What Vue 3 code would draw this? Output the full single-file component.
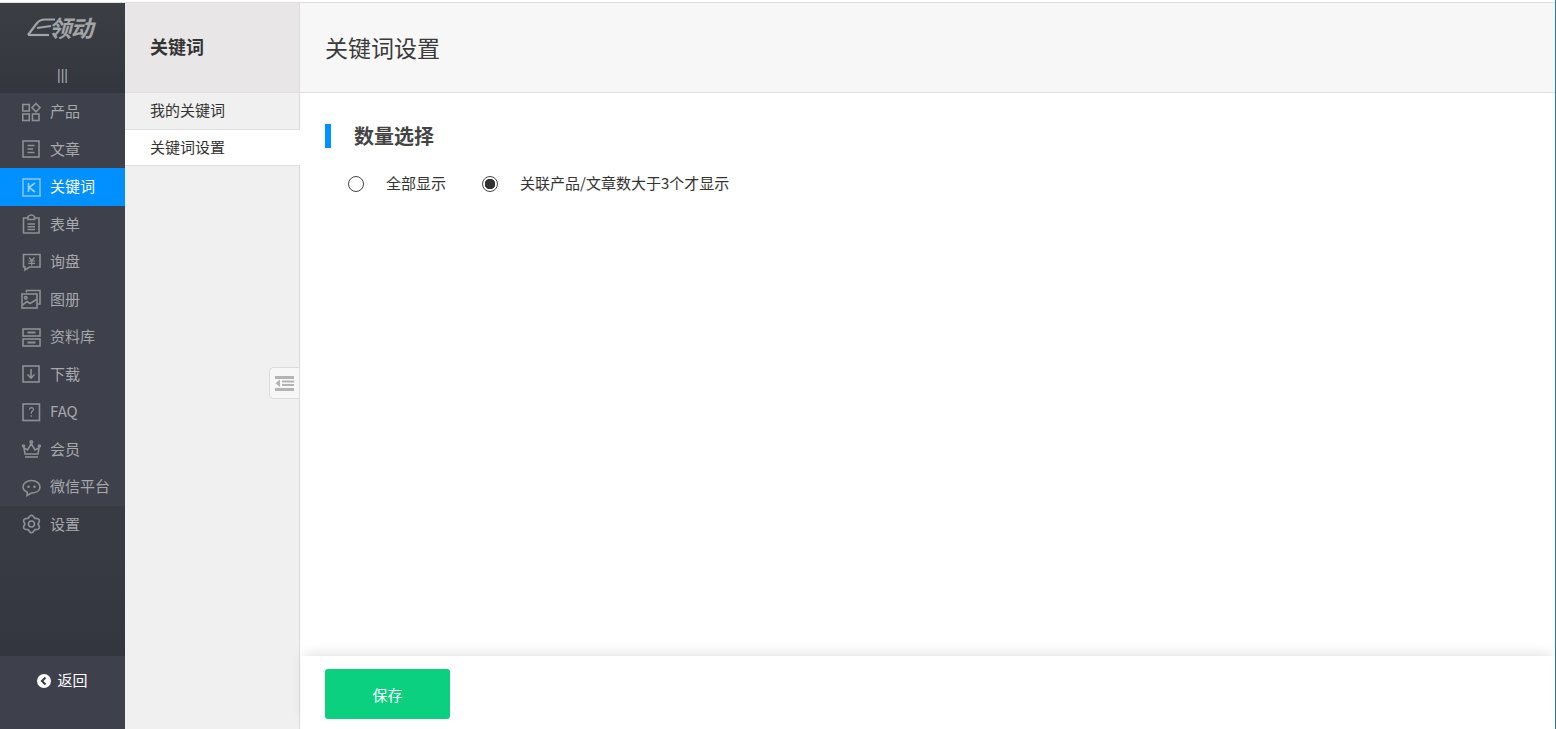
<script setup>
const menu = [
  { key: 'product', label: '产品' },
  { key: 'article', label: '文章' },
  { key: 'keyword', label: '关键词', active: true },
  { key: 'form', label: '表单' },
  { key: 'inquiry', label: '询盘' },
  { key: 'album', label: '图册' },
  { key: 'library', label: '资料库' },
  { key: 'download', label: '下载' },
  { key: 'faq', label: 'FAQ' },
  { key: 'member', label: '会员' },
  { key: 'wechat', label: '微信平台' },
  { key: 'settings', label: '设置', dark: true }
]
</script>

<template>
  <div class="page">
    <div class="topline"></div>
    <div class="main">
      <aside class="sidebar">
        <div class="brand">
          <div class="logo">
            <svg class="swoosh" width="28" height="20" viewBox="0 0 28 20" fill="none" stroke="#a2a4a6" stroke-width="2.200">
              <path d="M1 18 L10 6 Q13 2.500 18 2.500 L28 2.500" />
              <path d="M1 18 L22 18" />
              <path d="M10 11 L24 9" />
            </svg>
            <span class="logo-text">领动</span>
          </div>
          <div class="bars">|||</div>
        </div>
        <nav class="menu">
          <a
            v-for="item in menu"
            :key="item.key"
            class="menu-item"
            :class="{ active: item.active, dark: item.dark }"
          >
            <svg class="menu-icon" width="20" height="20" viewBox="0 0 20 20" fill="none" stroke="currentColor" stroke-width="1.600">
              <template v-if="item.key === 'product'">
                <rect x="1.800" y="2.500" width="6.500" height="6.500" />
                <path d="M15 1.500 L19 5.700 L15 9.900 L11 5.700 Z" />
                <rect x="1.800" y="12" width="6.500" height="6.500" />
                <rect x="11.500" y="12" width="6.500" height="6.500" />
              </template>
              <template v-else-if="item.key === 'article'">
                <rect x="2" y="2" width="16" height="16" />
                <path d="M6.500 6.500 H13.500 M6.500 10 H12 M6.500 13.500 H13.500" />
              </template>
              <template v-else-if="item.key === 'keyword'">
                <rect x="2" y="2" width="17" height="17" stroke-opacity=".6" />
                <path d="M7.500 6 V15 M14 6 L8 10.500 L14 15" stroke-opacity=".75" />
              </template>
              <template v-else-if="item.key === 'form'">
                <path d="M7 4 H2.500 V19 H18 V4 H13.500" />
                <path d="M7 5.500 V2.500 Q10.300 -0.500 13.500 2.500 V5.500 Z" />
                <path d="M6.500 10 H14 M6.500 12.700 H14 M6.500 15.500 H14" />
              </template>
              <template v-else-if="item.key === 'inquiry'">
                <path d="M2.500 2.500 H19 V15 H8.500 L4 18 V15 H2.500 Z" />
                <path d="M8 5.500 L10.700 8.500 L13.500 5.500 M7.300 9 H14 M7.300 11.300 H14 M10.700 8.500 V13.500" stroke-width="1.200" />
              </template>
              <template v-else-if="item.key === 'album'">
                <path d="M5.500 3.500 V1.500 H19 V15 H16.500" />
                <rect x="1" y="5" width="15" height="14" />
                <circle cx="4.800" cy="8.800" r="1.300" />
                <path d="M1.500 16 L6 12.500 L9 14.500 L15.500 10.500" />
              </template>
              <template v-else-if="item.key === 'library'">
                <rect x="2" y="2" width="17" height="7" />
                <rect x="2" y="12" width="17" height="7" />
                <path d="M6.500 5.500 H14.500 M6.500 15.500 H14.500" stroke-width="2" />
              </template>
              <template v-else-if="item.key === 'download'">
                <rect x="2" y="2" width="16" height="16" />
                <path d="M10 5 V13.500 M6.500 10.500 L10 14 L13.500 10.500" />
              </template>
              <template v-else-if="item.key === 'faq'">
                <rect x="2" y="2" width="16.500" height="16.500" />
                <path d="M8.300 7.500 Q8.500 5.600 10.400 5.600 Q12.500 5.700 12.500 7.500 Q12.500 8.800 10.400 10 V11.800 M10.400 13.200 V14.700" stroke-width="1.200" />
              </template>
              <template v-else-if="item.key === 'member'">
                <path d="M3 9 L6.500 11 L10.300 4.500 L14 11 L18 9 L17 15 H4 Z" />
                <circle cx="10.300" cy="3" r="1.200" />
                <circle cx="2.500" cy="7" r="1" />
                <circle cx="18.300" cy="7" r="1" />
                <path d="M4 18 H17" />
              </template>
              <template v-else-if="item.key === 'wechat'">
                <path d="M10.500 3.500 C15.300 3.500 19 6.200 19 10 C19 13.800 15.300 16 10.500 16 L6 18.500 L6.300 15.300 C3.500 14 2 12 2 10 C2 6.200 5.700 3.500 10.500 3.500 Z" />
                <circle cx="7.500" cy="9.800" r="1.300" fill="currentColor" stroke="none" />
                <circle cx="13.500" cy="9.800" r="1.300" fill="currentColor" stroke="none" />
              </template>
              <template v-else>
                <path d="M17 10 Q20.900 16 13.750 15.630 Q10.500 22 7.250 15.630 Q0.100 16 4 10 Q0.100 4 7.250 4.370 Q10.500 -2 13.750 4.370 Q20.900 4 17 10 Z" stroke-linejoin="round" />
                <circle cx="10.500" cy="10" r="3" />
              </template>
            </svg>
            <span class="menu-label">{{ item.label }}</span>
          </a>
          <div class="menu-fill"></div>
        </nav>
        <div class="back">
          <svg width="14" height="14" viewBox="0 0 14 14">
            <circle cx="7" cy="7" r="7" fill="#fff" />
            <path d="M8.500 3.500 L5 7 L8.500 10.500" fill="none" stroke="#3e404b" stroke-width="2.200" />
          </svg>
          <span class="back-label">返回</span>
        </div>
      </aside>

      <section class="subnav">
        <div class="subnav-head">关键词</div>
        <a class="subnav-item">我的关键词</a>
        <a class="subnav-item current">关键词设置</a>
        <div class="collapse">
          <svg width="19" height="15" viewBox="0 0 19 15" fill="#b4b4b4">
            <rect x="0" y="0" width="19" height="3" />
            <rect x="7" y="4.500" width="12" height="2" />
            <rect x="7" y="8" width="12" height="2" />
            <rect x="0" y="12" width="19" height="3" />
            <path d="M5 3.500 V11 L0.500 7.300 Z" />
          </svg>
        </div>
      </section>

      <section class="content">
        <header class="content-head">关键词设置</header>
        <div class="content-body">
          <h2 class="section-title">数量选择</h2>
          <div class="options">
            <label class="option">
              <span class="radio"></span>
              <span class="option-label">全部显示</span>
            </label>
            <label class="option">
              <span class="radio checked"></span>
              <span class="option-label">关联产品/文章数大于3个才显示</span>
            </label>
          </div>
        </div>
        <footer class="content-foot">
          <button class="save" type="button">保存</button>
        </footer>
      </section>
    </div>
  </div>
</template>

<style>
html, body { margin: 0; padding: 0; background: #fff; overflow: hidden; }
</style>

<style scoped>
.page {
  width: 1556px;
  height: 729px;
  display: flex;
  flex-direction: column;
  box-sizing: border-box;
  border-right: 1px solid #1f7ac4;
  background: #fff;
  font-family: "Noto Sans CJK SC", "Noto Sans", sans-serif;
  font-size: 15px;
  color: #333;
}
.topline {
  height: 3px;
  flex: none;
  box-sizing: border-box;
  border-bottom: 1px solid #dfdfe1;
  background: #fff;
}
.main {
  flex: 1;
  min-height: 0;
  display: flex;
}
.sidebar {
  width: 125px;
  flex: none;
  display: flex;
  flex-direction: column;
}
.brand {
  height: 90px;
  flex: none;
  background: linear-gradient(#3b3f44, #33363e);
  display: flex;
  flex-direction: column;
  align-items: center;
  box-sizing: border-box;
  padding-top: 12px;
}
.logo {
  height: 24px;
  width: 72px;
  display: flex;
  align-items: center;
  color: #a2a4a6;
}
.swoosh { flex: none; margin-right: -6px; }
.logo-text {
  font-size: 23px;
  line-height: 24px;
  font-weight: 700;
  font-style: italic;
  letter-spacing: -1px;
  white-space: nowrap;
}
.bars {
  margin-top: 28px;
  font-family: "Liberation Sans", sans-serif;
  font-size: 14px;
  line-height: 16px;
  color: #a9adb4;
}
.menu {
  flex: 1;
  min-height: 0;
  display: flex;
  flex-direction: column;
  background: #3e404b;
}
.menu-item {
  height: 37.5px;
  flex: none;
  display: flex;
  align-items: center;
  box-sizing: border-box;
  padding-left: 21px;
  gap: 9px;
  color: #a6a8ac;
  line-height: 20px;
}
.menu-label { position: relative; top: -0.5px; }
.menu-icon { flex: none; color: #8e9094; }
.menu-item.active { background: #0090ff; color: #fff; }
.menu-item.active .menu-icon { color: #cfe9ff; }
.menu-item.dark { background: #383b44; }
.menu-fill {
  flex: 1;
  background: linear-gradient(#383b44, #33363e);
}
.back {
  height: 73px;
  flex: none;
  background: #3e404b;
  color: #fff;
  display: flex;
  align-items: center;
  justify-content: center;
  gap: 6px;
  padding-bottom: 24px;
  box-sizing: border-box;
}
.back-label { position: relative; top: -1px; }
.subnav {
  position: relative;
  width: 175px;
  flex: none;
  box-sizing: border-box;
  border-right: 1px solid #dcdcde;
  background: #f0f0f0;
  display: flex;
  flex-direction: column;
}
.subnav-head {
  height: 90px;
  flex: none;
  box-sizing: border-box;
  border-bottom: 1px solid #dfdfe1;
  background: #e8e6e7;
  padding: 0 0 3px 25px;
  display: flex;
  align-items: center;
  font-size: 18px;
  font-weight: 700;
  color: #333;
}
.subnav-item {
  height: 37px;
  flex: none;
  box-sizing: border-box;
  padding: 0 0 3px 25px;
  display: flex;
  align-items: center;
  border-bottom: 1px solid #dfdfe1;
  color: #333;
}
.subnav-item.current {
  height: 36px;
  background: #fff;
  margin-right: -1px;
  position: relative;
}
.collapse {
  position: absolute;
  right: 0;
  top: 364px;
  width: 30px;
  height: 32px;
  box-sizing: border-box;
  border: 1px solid #dcdcde;
  border-right: 0;
  border-radius: 5px 0 0 5px;
  background: #f7f7f7;
  display: flex;
  align-items: center;
  justify-content: center;
}
.content {
  flex: 1;
  min-width: 0;
  display: flex;
  flex-direction: column;
}
.content-head {
  height: 90px;
  flex: none;
  box-sizing: border-box;
  border-bottom: 1px solid #dfdfe1;
  background: #f7f7f7;
  padding: 0 0 2px 25px;
  display: flex;
  align-items: center;
  font-size: 23px;
  color: #3a3a3a;
}
.content-body {
  flex: 1;
  min-height: 0;
  padding: 31px 25px 0;
}
.section-title {
  margin: 0;
  height: 24px;
  box-sizing: border-box;
  border-left: 6px solid #0090ff;
  padding-left: 23px;
  font-size: 20px;
  line-height: 23px;
  font-weight: 700;
  color: #444;
}
.options {
  display: flex;
  gap: 36px;
  margin-top: 24px;
  padding-left: 23px;
}
.option {
  display: flex;
  align-items: center;
  gap: 22px;
  height: 24px;
  color: #333;
}
.option-label { position: relative; top: -2px; }
.radio {
  width: 16px;
  height: 16px;
  box-sizing: border-box;
  border: 1px solid #444;
  border-radius: 50%;
  background: #fff;
  flex: none;
}
.radio.checked {
  background: radial-gradient(circle, #333 0 5px, #fff 5.500px);
}
.content-foot {
  height: 73px;
  flex: none;
  background: #fff;
  box-shadow: 0 -6px 12px -4px rgba(0, 0, 0, 0.12);
  position: relative;
  padding: 13px 25px 0;
  box-sizing: border-box;
}
.save {
  width: 125px;
  height: 50px;
  border: 0;
  border-radius: 3px;
  background: #0bd07f;
  color: #fff;
  font: inherit;
  padding: 0;
}
</style>
